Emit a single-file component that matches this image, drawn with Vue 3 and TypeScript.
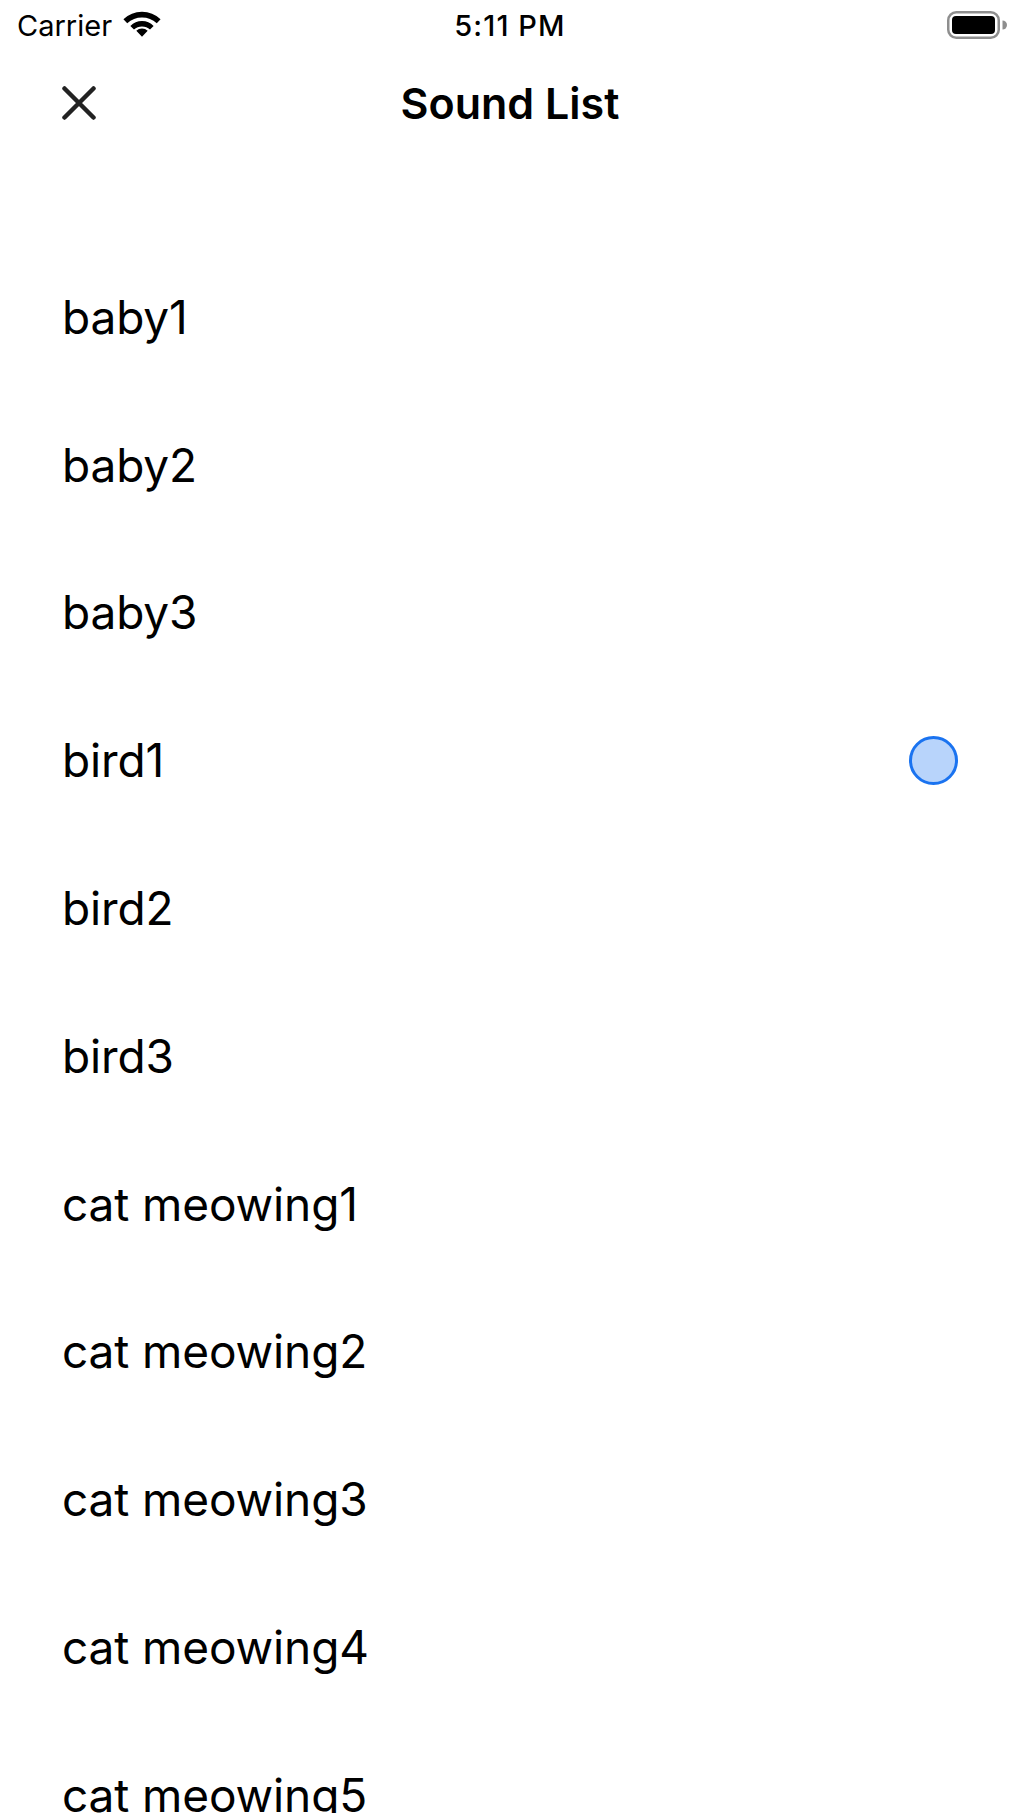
<script setup lang="ts">
const sounds: string[] = ['baby1','baby2','baby3','bird1','bird2','bird3','cat meowing1','cat meowing2','cat meowing3','cat meowing4','cat meowing5']
const selected = 'bird1'
</script>

<template>
  <div class="screen">
    <div class="status">
      <div class="left">
        <span class="carrier">Carrier</span>
        <svg class="wifi" viewBox="0 0 36 26" width="38" height="28"><path d="M18 25 L12.6 19.3 A8 8 0 0 1 23.4 19.3 Z M18 1.500 A26 26 0 0 1 35.600 8.600 L32 12.300 A21 21 0 0 0 4 12.300 L0.400 8.600 A26 26 0 0 1 18 1.500 Z M18 10.200 A16 16 0 0 1 29 14.800 L25.600 18.300 A11 11 0 0 0 10.400 18.300 L7 14.800 A16 16 0 0 1 18 10.200 Z" fill="#000"/></svg>
      </div>
      <span class="time">5:11 PM</span>
      <svg class="battery" viewBox="0 0 60 28" width="60" height="28">
        <rect x="1.250" y="1.250" width="50.500" height="25.500" rx="8" fill="none" stroke="#8e8e8e" stroke-width="2.500"/>
        <rect x="5" y="5" width="43" height="18" rx="4" fill="#000"/>
        <path d="M55.500 9.500 a4.500 4.500 0 0 1 0 9 z" fill="#8e8e8e"/>
      </svg>
    </div>
    <header class="nav">
      <svg class="close" viewBox="0 0 34 34" width="34" height="34"><path d="M2.500 2.500 L31.500 31.500 M31.500 2.500 L2.500 31.500" stroke="#222" stroke-width="4.500" stroke-linecap="round"/></svg>
      <h1 class="title">Sound List</h1>
    </header>
    <ul class="list">
      <li v-for="s in sounds" :key="s" class="row">
        <span class="name">{{ s }}</span>
        <span v-if="s === selected" class="radio"></span>
      </li>
    </ul>
  </div>
</template>

<style>
html, body { margin: 0; background: #fff; overflow: hidden; }
</style>

<style scoped>
.screen { width: 1020px; height: 1813px; overflow: hidden; background: #fff; color: #000; font-family: Inter, "Liberation Sans", sans-serif; }
.status { height: 50px; display: flex; align-items: center; justify-content: space-between; padding: 0 13px 0 17px; position: relative; }
.left { display: flex; align-items: center; gap: 11px; }
.carrier { font-size: 29px; }
.wifi { margin-top: -3px; }
.time { font-size: 29px; font-weight: 500; letter-spacing: 1.100px; position: absolute; left: 0; right: 0; text-align: center; }
.nav { height: 106px; display: flex; align-items: center; justify-content: center; position: relative; }
.close { position: absolute; left: 62px; top: 36px; }
.title { margin: 0; font-size: 43px; font-weight: 600; }
.list { list-style: none; margin: 0; padding: 87px 62px 0 62px; }
.row { height: 147.800px; display: flex; align-items: center; justify-content: space-between; }
.name { font-size: 46px; letter-spacing: -0.120px; }
.radio { box-sizing: border-box; width: 49px; height: 49px; border-radius: 50%; background: #b8d4fb; border: 3px solid #1a73f0; }
</style>
